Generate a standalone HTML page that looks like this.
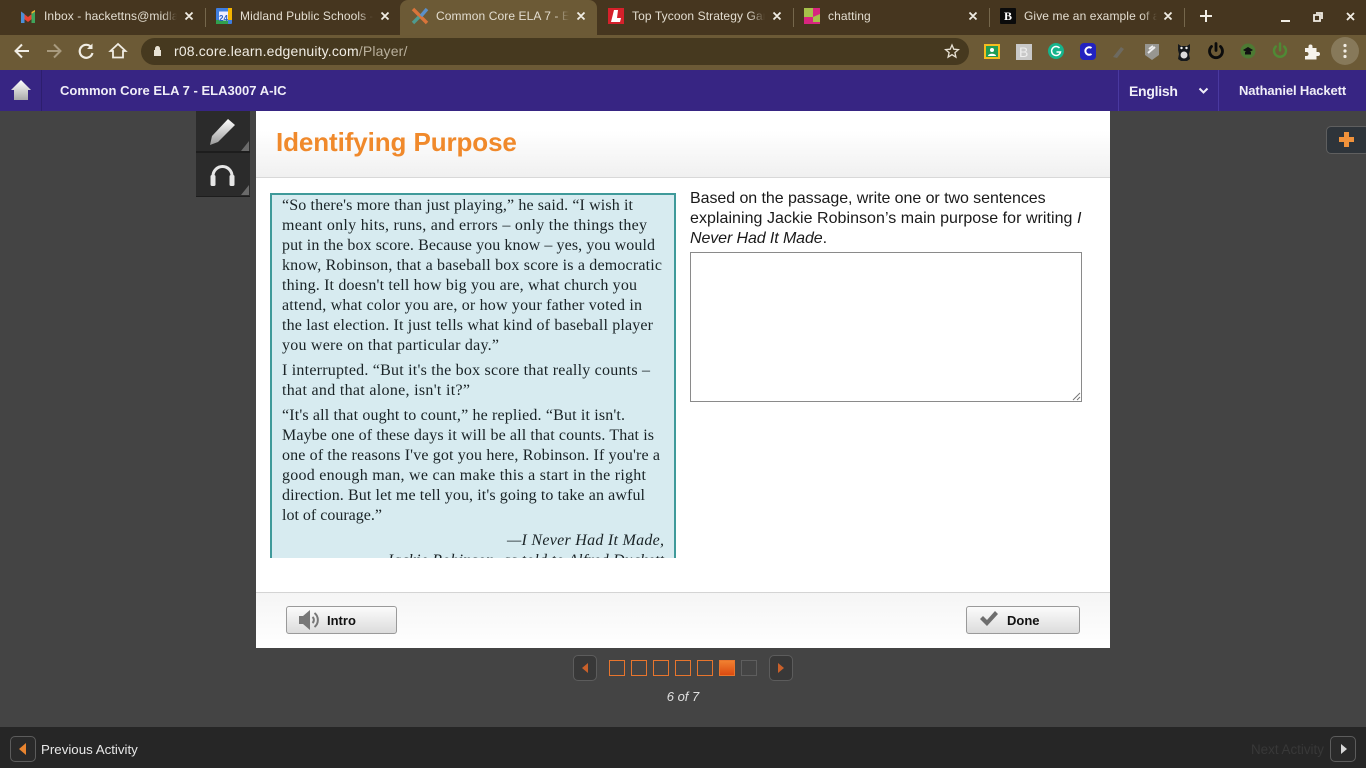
<!DOCTYPE html>
<html lang="en"><head><meta charset="utf-8"><title>Identifying Purpose</title>
<style>
html,body{margin:0;padding:0;width:1366px;height:768px;overflow:hidden;background:#444;font-family:"Liberation Sans",sans-serif}
.a{position:absolute}
.t{position:absolute;white-space:nowrap;overflow:hidden;font-size:12px;line-height:16px;top:8px;color:#e3ddd0;letter-spacing:.1px}
.t:after{content:"";position:absolute;right:0;top:0;bottom:0;width:15px;background:linear-gradient(90deg,rgba(70,54,31,0),#46361f)}
.t.n:after{display:none}
.t.act:after{background:linear-gradient(90deg,rgba(108,90,54,0),#6c5a36)}
.sep{position:absolute;top:8px;width:1px;height:19px;background:#75674c}
.sq{position:absolute;top:660px;width:14px;height:14px;border:1px solid #e8752d}
.btn{position:absolute;top:606px;height:26px;border:1px solid #9a9a9a;border-radius:3px;background:linear-gradient(#fbfbfb,#dcdcdc);font:bold 13px/28px "Liberation Sans",sans-serif;color:#111}
.nb{position:absolute;border:1px solid #5c5c5c;border-radius:5px;background:#383838;box-sizing:border-box}
</style></head><body>

<!-- Tab strip -->
<div class="a" style="left:0;top:0;width:1366px;height:35px;background:#46361f"></div>
<div class="a" style="left:400px;top:0;width:197px;height:35px;background:#6c5a36;border-radius:8px 8px 0 0"></div>
<div class="sep" style="left:205px"></div><div class="sep" style="left:793px"></div><div class="sep" style="left:989px"></div><div class="sep" style="left:1184px"></div>

<svg class="a" style="left:0;top:0" width="1366" height="35">
<g transform="translate(21,10)"><path d="M0 1.500L7 7l7-5.500v5L7 12 0 6.500z" fill="#ea4335"/><path d="M0 1.500v11.500h3.500V4z" fill="#4a8fd8"/><path d="M14 1.500v11.500h-3.500V4z" fill="#3fa45b"/><path d="M10.500 4L14 1.500V0L10.500 2z" fill="#f2b632"/></g>
<g transform="translate(216,8)"><rect width="16" height="16" rx="1" fill="#3f7ee0"/><rect x="12" y="0" width="4" height="12" fill="#f4b400"/><rect x="0" y="12" width="12" height="4" fill="#30a04f"/><rect x="3" y="3.500" width="9" height="9" fill="#eef"/></g>
<text x="219" y="21" font-family="Liberation Sans" font-size="8" font-weight="bold" fill="#2a5fc0">24</text>
<g transform="translate(412,8)" fill="none" stroke-width="3.400"><path d="M1 1l14 14" stroke="#d9743a"/><path d="M15 1L9 8" stroke="#5b8fc8"/><path d="M1 15l6-6" stroke="#4f9a8f"/></g>
<g transform="translate(608,8)"><rect width="16" height="16" fill="#d5212b"/><path d="M6 2h4l-1 8h4l-1 4H3z" fill="#fff"/></g>
<g transform="translate(804,8)"><rect width="16" height="16" fill="#d8257f"/><path d="M0 0h9v9H0zM9 9l7-3v8H9z" fill="#a6c14a"/></g>
<g transform="translate(1000,8)"><rect width="16" height="16" rx="1" fill="#0b0b0b"/></g>
<text x="1004" y="20" font-family="Liberation Serif" font-size="12" font-weight="bold" fill="#fff">B</text>
<g stroke="#f1ede4" stroke-width="1.800" fill="none">
<path d="M185.500 12.500l7 7m0-7l-7 7M381.500 12.500l7 7m0-7l-7 7M577.500 12.500l7 7m0-7l-7 7M773.500 12.500l7 7m0-7l-7 7M969.500 12.500l7 7m0-7l-7 7M1164.500 12.500l7 7m0-7l-7 7"/>
<path d="M1206 10v12M1200 16h12" stroke-width="2"/>
<path d="M1281 21h9" stroke-width="2"/>
<path d="M1316 13h6v6M1314 15h6v6h-6z" stroke-width="1.800"/>
<path d="M1347 13l7 7m0-7l-7 7" stroke-width="1.800"/>
</g>
</svg>
<div class="t" style="left:44px;width:133px">Inbox - hackettns@midland</div>
<div class="t" style="left:240px;width:133px">Midland Public Schools - Calendar</div>
<div class="t act" style="left:436px;width:133px">Common Core ELA 7 - Edgenuity</div>
<div class="t" style="left:632px;width:133px">Top Tycoon Strategy Games</div>
<div class="t n" style="left:828px;width:133px">chatting</div>
<div class="t" style="left:1024px;width:133px">Give me an example of a</div>

<!-- Toolbar -->
<div class="a" style="left:0;top:35px;width:1366px;height:35px;background:#6c5a36"></div>
<div class="a" style="left:141px;top:38px;width:828px;height:27px;background:#46391f;border-radius:14px"></div>
<div class="a" style="left:174px;top:43px;font-size:14px;line-height:17px;color:#f1ede4;white-space:nowrap;letter-spacing:.16px">r08.core.learn.edgenuity.com<span style="color:#b9b09c">/Player/</span></div>
<svg class="a" style="left:0;top:35px" width="1366" height="35">
<g fill="none" stroke="#f1ede4" stroke-width="2">
<path d="M29 16H16M22 9.500l-6.500 6.500 6.500 6.500"/>
<path d="M47 16H60M54 9.500l6.500 6.500-6.500 6.500" stroke="#a89a7e"/>
<path d="M91.500 12.500a6.500 6.500 0 1 0 1 5.500" stroke-width="2.200"/>
<path d="M118 9l-7.500 7H113v6.500h10V16h2.500z" stroke-width="1.800"/>
</g>
<path d="M92.500 8.500v5.500H87z" fill="#f1ede4"/>
<path d="M155 15v-1.500a2.500 2.500 0 0 1 5 0V15h1v6h-7v-6z" fill="#e8e2d4"/>
<path d="M952 10l1.800 4.200 4.600.4-3.500 3 1 4.500-3.900-2.400-3.900 2.400 1-4.500-3.500-3 4.600-.4z" fill="none" stroke="#e8e2d4" stroke-width="1.300"/>
<rect x="985" y="10" width="14" height="13" fill="#1f9d55" stroke="#f5bd1f" stroke-width="2"/><circle cx="992" cy="15" r="2" fill="#fff"/><path d="M988 21c0-3 8-3 8 0z" fill="#fff"/>
<rect x="1016" y="9" width="16" height="16" fill="#c9c9c9"/>
<text x="1019" y="22" font-family="Liberation Sans" font-size="14" fill="#eeeeee">B</text>
<circle cx="1056" cy="16" r="8" fill="#15b48c"/><path d="M1059.500 13a4.500 4.500 0 1 0 1 4h-4" fill="none" stroke="#fff" stroke-width="1.500"/>
<rect x="1080" y="8" width="16" height="17" rx="4" fill="#2222c0"/><path d="M1091.500 13a3.800 3.800 0 1 0 0 6" fill="none" stroke="#fff" stroke-width="2"/>
<path d="M1113 22l8-10 3 2-7 9z" fill="#6d6a60"/>
<path d="M1145 9h14v11l-7 5-7-5z" fill="#979691"/><path d="M1148 18l7-6M1149 14l4-3" stroke="#eee" stroke-width="2"/>
<path d="M1178 9l3 2h6l3-2v6l-1 4 1 5-3 2h-6l-3-2 1-5-1-4z" fill="#16191c"/><circle cx="1184" cy="20" r="3.500" fill="#dcdcdc"/><circle cx="1181.500" cy="13" r="1.200" fill="#eee"/><circle cx="1186.500" cy="13" r="1.200" fill="#eee"/>
<g fill="none" stroke-linecap="round"><path d="M1211.500 11.500a6.500 6.500 0 1 0 9 0M1216 8.500v7" stroke="#0c0c0c" stroke-width="2.800"/>
<path d="M1275.800 11.500a6 6 0 1 0 8.400 0M1280 8.500v7" stroke="#4f8a35" stroke-width="2.400"/></g>
<circle cx="1248" cy="16" r="7.500" fill="#4d7a33"/><path d="M1243 15l5-3 5 3-5 3z" fill="#111"/><path d="M1245 17h6v2.500h-6z" fill="#111"/>
<path d="M1305 13h3.500v-1.500a2 2 0 0 1 4 0V13h4v4h1.500a2 2 0 0 1 0 4H1316.500v3.500H1305V21h1.500a2 2 0 0 0 0-4H1305z" fill="#f6f3ec"/>
<circle cx="1345" cy="16" r="14" fill="#87795a"/>
<g fill="#f1ede4"><circle cx="1345" cy="10.500" r="1.600"/><circle cx="1345" cy="16" r="1.600"/><circle cx="1345" cy="21.500" r="1.600"/></g>
</svg>

<!-- App header -->
<div class="a" style="left:0;top:70px;width:1366px;height:41px;background:#372583"></div>
<div class="a" style="left:41px;top:70px;width:1px;height:41px;background:#2d1e6e"></div>
<div class="a" style="left:1118px;top:70px;width:1px;height:41px;background:#4a39a0"></div>
<div class="a" style="left:1218px;top:70px;width:1px;height:41px;background:#4a39a0"></div>
<svg class="a" style="left:11px;top:80px" width="20" height="20"><defs><linearGradient id="h" x1="0" y1="0" x2="0" y2="1"><stop offset="0" stop-color="#fff"/><stop offset="1" stop-color="#aaa"/></linearGradient></defs><path d="M10 0L20 10H17V20H3V10H0z" fill="url(#h)"/></svg>
<div class="a" style="left:60px;top:83px;font:bold 13px/16px 'Liberation Sans',sans-serif;color:#f0eef8;white-space:nowrap;letter-spacing:.02px">Common Core ELA 7 - ELA3007 A-IC</div>
<div class="a" style="left:1129px;top:83px;font:bold 14px/16px 'Liberation Sans',sans-serif;color:#f0eef8;letter-spacing:-.28px">English</div>
<svg class="a" style="left:1198px;top:87px" width="11" height="8"><path d="M1.500 1.500L5.500 5.500 9.500 1.500" fill="none" stroke="#f0eef8" stroke-width="2"/></svg>
<div class="a" style="left:1239px;top:83px;font:bold 13px/16px 'Liberation Sans',sans-serif;color:#f0eef8;white-space:nowrap;letter-spacing:-.12px">Nathaniel Hackett</div>

<!-- Side tools -->
<div class="a" style="left:196px;top:111px;width:54px;height:85px;background:#2b2b2b;border-bottom:1px solid #1d1d1d"></div>
<div class="a" style="left:196px;top:151px;width:54px;height:2px;background:#1d1d1d"></div>
<svg class="a" style="left:196px;top:111px" width="54" height="86">
<defs><linearGradient id="g" x1="0" y1="0" x2="0" y2="1"><stop offset="0" stop-color="#fff"/><stop offset="1" stop-color="#9a9a9a"/></linearGradient></defs>
<path d="M32 8l7 6-17 17-8 3 2-9z" fill="url(#g)"/>
<path d="M54 30v10H46zM54 74v10H46z" fill="#6a6a6a" transform="translate(-1,0)"/>
<path d="M17 72v-7a9.500 9.500 0 0 1 19 0v7" fill="none" stroke="#e6e6e6" stroke-width="3"/>
<rect x="14.500" y="64" width="5" height="11" rx="1.500" fill="#e6e6e6"/><rect x="33.500" y="64" width="5" height="11" rx="1.500" fill="#e6e6e6"/>
</svg>

<!-- Main panel -->
<div class="a" style="left:256px;top:111px;width:854px;height:537px;background:#fff"></div>
<div class="a" style="left:256px;top:111px;width:854px;height:66px;background:linear-gradient(#fff 30%,#f0f0f0);border-bottom:1px solid #d8d8d8"></div>
<div class="a" style="left:276px;top:126px;font:bold 26px/32px 'Liberation Sans',sans-serif;color:#f0892b;white-space:nowrap;letter-spacing:-.1px">Identifying Purpose</div>

<!-- Passage -->
<div class="a" style="left:270px;top:193px;width:402px;background:#d7ebf0;border:2px solid #3f9a9a;border-bottom:0;box-sizing:content-box;height:363px"></div>
<svg class="a" style="left:272px;top:195px" width="402" height="363" font-family="Liberation Serif" font-size="16" fill="#1a2326">
<g transform="translate(-272,-194)">
<text x="282" y="209" textLength="351">“So there's more than just playing,” he said. “I wish it</text>
<text x="282" y="229" textLength="365">meant only hits, runs, and errors – only the things they</text>
<text x="282" y="249" textLength="373">put in the box score. Because you know – yes, you would</text>
<text x="282" y="269" textLength="380">know, Robinson, that a baseball box score is a democratic</text>
<text x="282" y="289" textLength="355">thing. It doesn't tell how big you are, what church you</text>
<text x="282" y="309" textLength="360">attend, what color you are, or how your father voted in</text>
<text x="282" y="329" textLength="371">the last election. It just tells what kind of baseball player</text>
<text x="282" y="349" textLength="217">you were on that particular day.”</text>
<text x="282" y="374" textLength="368">I interrupted. “But it's the box score that really counts –</text>
<text x="282" y="394" textLength="188">that and that alone, isn't it?”</text>
<text x="282" y="419" textLength="343">“It's all that ought to count,” he replied. “But it isn't.</text>
<text x="282" y="439" textLength="372">Maybe one of these days it will be all that counts. That is</text>
<text x="282" y="459" textLength="378">one of the reasons I've got you here, Robinson. If you're a</text>
<text x="282" y="479" textLength="364">good enough man, we can make this a start in the right</text>
<text x="282" y="499" textLength="363">direction. But let me tell you, it's going to take an awful</text>
<text x="282" y="519" textLength="100">lot of courage.”</text>
<text x="507" y="544" textLength="157" font-style="italic">—I Never Had It Made,</text>
<text x="386" y="564" textLength="278" font-style="italic">Jackie Robinson, as told to Alfred Duckett</text>
</g></svg>

<!-- Question -->
<div class="a" style="left:690px;top:189px;width:410px;font-size:16px;line-height:20px;color:#1a1a1a;white-space:nowrap"><span style="letter-spacing:-.06px">Based on the passage, write one or two sentences</span><br><span style="letter-spacing:.04px">explaining Jackie Robinson’s main purpose for writing <i>I</i></span><br><span style="letter-spacing:-.1px"><i>Never Had It Made</i>.</span></div>
<div class="a" style="left:690px;top:252px;width:390px;height:148px;background:#fff;border:1px solid #8a8a8a"></div>
<svg class="a" style="left:1072px;top:392px" width="9" height="9"><path d="M1 8L8 1M5 8L8 5" stroke="#777" fill="none"/></svg>

<!-- Footer -->
<div class="a" style="left:256px;top:592px;width:854px;height:55px;background:linear-gradient(#f5f5f5,#fff);border-top:1px solid #d4d4d4"></div>
<div class="btn" style="left:286px;width:109px"><span class="a" style="left:40px;top:0">Intro</span>
<svg class="a" style="left:11px;top:2px" width="24" height="22"><path d="M1 7h4l7-6v20l-7-6H1z" fill="#777"/><path d="M14.500 8a4 4 0 0 1 0 6M16.500 4a9 9 0 0 1 0 14" fill="none" stroke="#777" stroke-width="2"/></svg></div>
<div class="btn" style="left:966px;width:112px"><span class="a" style="left:40px;top:0">Done</span>
<svg class="a" style="left:12px;top:3px" width="22" height="18"><path d="M1 9l3-3 4 4 8-9 3 3-11 12z" fill="#6e6e6e"/></svg></div>

<!-- Plus -->
<div class="a" style="left:1326px;top:126px;width:42px;height:26px;background:#2e343a;border:1px solid #5f5f5f;border-radius:5px;box-sizing:content-box"></div>
<svg class="a" style="left:1339px;top:132px" width="15" height="15"><path d="M5 0h5v5h5v5h-5v5H5v-5H0V5h5z" fill="#f0923b"/></svg>

<!-- Page nav -->
<div class="nb" style="left:573px;top:655px;width:24px;height:26px"></div>
<svg class="a" style="left:581px;top:662px" width="8" height="12"><path d="M7 1v10L1 6z" fill="#c9602a"/></svg>
<div class="sq" style="left:609px"></div><div class="sq" style="left:631px"></div><div class="sq" style="left:653px"></div><div class="sq" style="left:675px"></div><div class="sq" style="left:697px"></div>
<div class="sq" style="left:719px;background:linear-gradient(#f08030,#dc4a10)"></div>
<div class="sq" style="left:741px;border-color:#5e5e5e"></div>
<div class="nb" style="left:769px;top:655px;width:24px;height:26px"></div>
<svg class="a" style="left:777px;top:662px" width="8" height="12"><path d="M1 1v10L7 6z" fill="#c9602a"/></svg>
<div class="a" style="left:583px;top:689px;width:200px;text-align:center;font:italic 13px/16px 'Liberation Sans',sans-serif;color:#e0e0e0">6 of 7</div>

<!-- Bottom bar -->
<div class="a" style="left:0;top:727px;width:1366px;height:41px;background:#262626"></div>
<div class="nb" style="left:10px;top:736px;width:26px;height:26px;background:#2a2a2a"></div>
<svg class="a" style="left:19px;top:743px" width="8" height="12"><path d="M7 0v12L0 6z" fill="#e8842f"/></svg>
<div class="a" style="left:41px;top:742px;font-size:13.3px;line-height:16px;color:#e8e8e8;white-space:nowrap">Previous Activity</div>
<div class="a" style="left:1251px;top:742px;font-size:13.4px;line-height:16px;color:#383838;white-space:nowrap">Next Activity</div>
<div class="nb" style="left:1330px;top:736px;width:26px;height:26px;background:#2a2a2a"></div>
<svg class="a" style="left:1340px;top:743px" width="8" height="12"><path d="M1 1v10L7 6z" fill="#d8d8d8"/></svg>
</body></html>
